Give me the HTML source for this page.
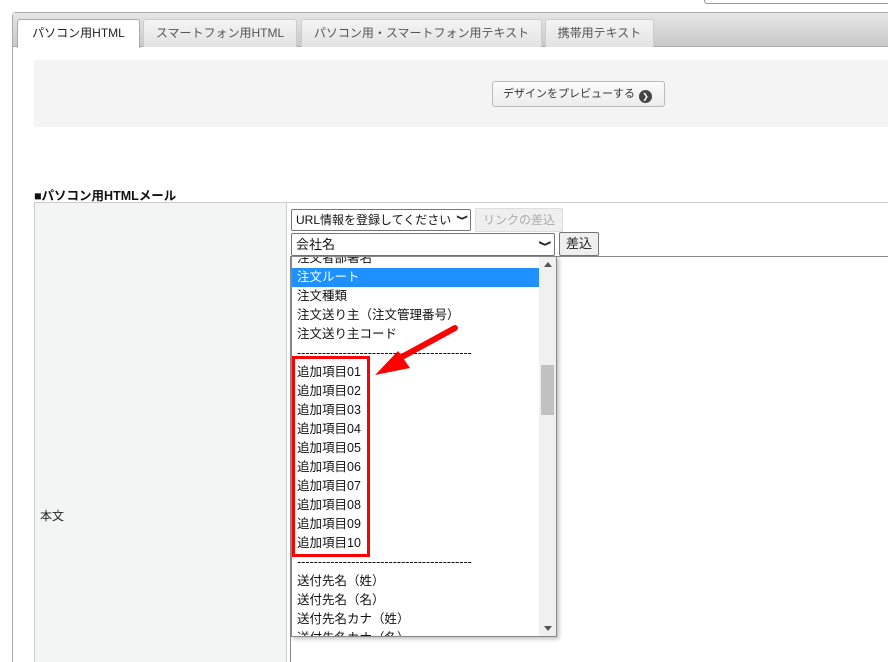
<!DOCTYPE html>
<html style="overflow:hidden;width:888px;height:662px"><head><meta charset="utf-8"><style>
*{margin:0;padding:0;box-sizing:border-box}
html,body{overflow:hidden}
body{width:888px;height:662px;background:#fff;font-family:"Liberation Sans","Noto Sans CJK JP",sans-serif;font-size:12px;color:#222;position:relative}
.a{position:absolute}
.tab{position:absolute;top:19px;height:28px;border:1px solid #ccc;border-bottom:none;border-radius:3px 3px 0 0;background:linear-gradient(#f4f4f4,#e2e2e2);color:#555;font-size:12px;line-height:27px;text-align:center;white-space:nowrap;overflow:hidden}
.it{height:19px;line-height:19px;padding-left:5px;font-size:12.5px;color:#111;white-space:nowrap}
</style></head><body>
<div class="a" style="left:704px;top:0;width:184px;height:4px;border:1px solid #999;border-top:none;border-right:none;border-radius:0 0 0 3px"></div>
<div class="a" style="left:12px;top:12px;width:876px;height:650px;border:1px solid #aaa;border-right:none;border-bottom:none;border-radius:4px 0 0 0"></div>
<div class="a" style="left:13px;top:13px;width:875px;height:34px;background:linear-gradient(#e6e6e6,#c9c9c9);border-bottom:1px solid #aaa"></div>
<div class="tab" style="left:17px;width:123px;background:#fff;height:29px;color:#222;border-color:#aaa">パソコン用HTML</div>
<div class="tab" style="left:143px;width:154px">スマートフォン用HTML</div>
<div class="tab" style="left:301px;width:241px">パソコン用・スマートフォン用テキスト</div>
<div class="tab" style="left:545px;width:109px">携帯用テキスト</div>
<div class="a" style="left:34px;top:60px;width:854px;height:67px;background:#f4f4f4"></div>
<div class="a" style="left:492px;top:81px;width:173px;height:26px;border:1px solid #bbb;border-radius:3px;background:linear-gradient(#fbfbfb,#ececec);font-size:11px;line-height:24px;padding-left:10px;color:#333;white-space:nowrap">デザインをプレビューする<span style="display:inline-block;width:13px;height:13px;border-radius:50%;background:#444;color:#fff;font-size:8px;line-height:13px;text-align:center;vertical-align:-2px;margin-left:4px">&#10095;</span></div>
<div class="a" style="left:34px;top:185px;font-weight:bold;font-size:12.5px;color:#111">■パソコン用HTMLメール</div>
<div class="a" style="left:34px;top:202px;width:854px;height:1px;background:#ccc"></div>
<div class="a" style="left:34px;top:203px;width:253px;height:459px;background:#f3f4f4;border-left:1px solid #ccc;border-right:1px solid #ccc"></div>
<div class="a" style="left:40px;top:507px;font-size:12px">本文</div>
<div class="a" style="left:291px;top:209px;width:180px;height:22px;border:1px solid #767676;border-radius:2px;font-size:12px;line-height:20px;padding-left:4px;color:#111;white-space:nowrap;overflow:hidden">URL情報を登録してください</div>
<div class="a" style="left:458px;top:212px;font-size:10px;font-weight:bold;transform:rotate(90deg) scaleX(.7)">&#10095;</div>
<div class="a" style="left:475px;top:208px;width:88px;height:24px;border:1px solid #ddd;border-radius:2px;background:#efefef;color:#aaa;font-size:12px;line-height:22px;text-align:center">リンクの差込</div>
<div class="a" style="left:291px;top:233px;width:264px;height:23px;border:1px solid #767676;border-radius:2px;font-size:13px;line-height:21px;padding-left:4px;color:#111">会社名</div>
<div class="a" style="left:541px;top:237px;font-size:11px;font-weight:bold;transform:rotate(90deg) scaleX(.7)">&#10095;</div>
<div class="a" style="left:559px;top:232px;width:40px;height:24px;border:1px solid #767676;border-radius:2px;background:#efefef;font-size:13px;line-height:22px;text-align:center">差込</div>
<div class="a" style="left:556px;top:256px;width:332px;height:1px;background:#888"></div>
<div class="a" style="left:290px;top:256px;width:1px;height:406px;background:#888"></div>
<div class="a" style="left:291px;top:256px;width:266px;height:381px;border:1px solid #888;background:#fff;overflow:hidden;box-shadow:2px 2px 4px rgba(0,0,0,.25)">
<div style="position:absolute;top:-8px;left:0;width:247px">
<div class="it">注文者部署名</div>
<div class="it" style="background:#1e90ff;color:#fff">注文ルート</div>
<div class="it">注文種類</div>
<div class="it">注文送り主（注文管理番号）</div>
<div class="it">注文送り主コード</div>
<div class="it">------------------------------------------</div>
<div class="it">追加項目01</div><div class="it">追加項目02</div><div class="it">追加項目03</div><div class="it">追加項目04</div><div class="it">追加項目05</div><div class="it">追加項目06</div><div class="it">追加項目07</div><div class="it">追加項目08</div><div class="it">追加項目09</div><div class="it">追加項目10</div>
<div class="it">------------------------------------------</div>
<div class="it">送付先名（姓）</div><div class="it">送付先名（名）</div><div class="it">送付先名カナ（姓）</div><div class="it">送付先名カナ（名）</div>
</div>
<div style="position:absolute;right:0;top:0;width:17px;height:379px;background:#f0f0f0"></div>
<div style="position:absolute;right:2px;top:108px;width:13px;height:50px;background:#c1c1c1"></div>
<div style="position:absolute;right:4px;top:5px;width:0;height:0;border-left:4px solid transparent;border-right:4px solid transparent;border-bottom:5px solid #555"></div>
<div style="position:absolute;right:4px;bottom:5px;width:0;height:0;border-left:4px solid transparent;border-right:4px solid transparent;border-top:5px solid #555"></div>
</div>
<div class="a" style="left:292px;top:356px;width:78px;height:201px;border:3px solid #f00"></div>
<svg class="a" style="left:0;top:0" width="888" height="662"><line x1="455" y1="328" x2="400" y2="358" stroke="#f00" stroke-width="6" stroke-linecap="round"/><polygon points="375,375 398,351 410,368" fill="#f00"/></svg>
</body></html>
